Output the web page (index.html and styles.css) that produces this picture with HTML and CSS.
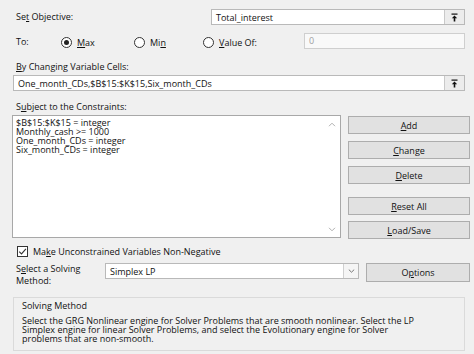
FILE: index.html
```html
<!DOCTYPE html>
<html>
<head>
<meta charset="utf-8">
<link rel="stylesheet" href="styles.css">
</head>
<body>
<div class="dialog">
  <div class="row r-objective">
    <span class="lbl">Se<u>t</u> Objective:</span>
    <div class="refedit obj">
      <span class="val">Total_interest</span>
      <span class="collapse"><svg width="9" height="9" viewBox="0 0 9 9"><rect x="1.5" y="0.5" width="6" height="1.2" fill="#111"/><path d="M4.5 2.4 L1.8 5.2 H3.7 V8.6 H5.3 V5.2 H7.2 Z" fill="#111"/></svg></span>
    </div>
  </div>

  <div class="row r-to">
    <span class="lbl">To:</span>
    <span class="radio"><span class="dot on"></span><span><u>M</u>ax</span></span>
    <span class="radio"><span class="dot"></span><span>Mi<u>n</u></span></span>
    <span class="radio"><span class="dot"></span><span><u>V</u>alue Of:</span></span>
    <div class="field disabled">0</div>
  </div>

  <div class="row r-label1"><span class="lbl"><u>B</u>y Changing Variable Cells:</span></div>

  <div class="row r-cells">
    <div class="refedit full">
      <span class="val">One_month_CDs,$B$15:$K$15,Six_month_CDs</span>
      <span class="collapse"><svg width="9" height="9" viewBox="0 0 9 9"><rect x="1.5" y="0.5" width="6" height="1.2" fill="#111"/><path d="M4.5 2.4 L1.8 5.2 H3.7 V8.6 H5.3 V5.2 H7.2 Z" fill="#111"/></svg></span>
    </div>
  </div>

  <div class="row r-label2"><span class="lbl">S<u>u</u>bject to the Constraints:</span></div>

  <div class="row r-constraints">
    <div class="listbox">
      <div class="items">
        <div>$B$15:$K$15 = integer</div>
        <div>Monthly_cash &gt;= 1000</div>
        <div>One_month_CDs = integer</div>
        <div>Six_month_CDs = integer</div>
      </div>
      <div class="scroll">
        <svg width="8" height="5" viewBox="0 0 8 5"><path d="M1 4.2 L4 1.2 L7 4.2" fill="none" stroke="#b0b0b0" stroke-width="1"/></svg>
        <svg width="8" height="5" viewBox="0 0 8 5"><path d="M1 0.8 L4 3.8 L7 0.8" fill="none" stroke="#b0b0b0" stroke-width="1"/></svg>
      </div>
    </div>
    <div class="buttons">
      <div class="btn b-add"><span><u>A</u>dd</span></div>
      <div class="btn b-change"><span><u>C</u>hange</span></div>
      <div class="btn b-delete"><span><u>D</u>elete</span></div>
      <div class="btn b-reset"><span><u>R</u>eset All</span></div>
      <div class="btn b-load"><span><u>L</u>oad/Save</span></div>
    </div>
  </div>

  <div class="row r-check">
    <span class="checkbox"><svg width="9" height="9" viewBox="0 0 9 9"><path d="M1.2 4.6 L3.5 6.9 L7.9 1.8" fill="none" stroke="#333" stroke-width="1.1"/></svg></span>
    <span>Ma<u>k</u>e Unconstrained Variables Non-Negative</span>
  </div>

  <div class="row r-method">
    <span class="lbl method-lbl">S<u>e</u>lect a Solving<br>Method:</span>
    <div class="select">
      <span class="val">Simplex LP</span>
      <span class="caret"><svg width="7" height="4" viewBox="0 0 7 4"><path d="M0.8 0.6 L3.5 3.2 L6.2 0.6" fill="none" stroke="#777" stroke-width="1"/></svg></span>
    </div>
    <div class="btn b-options"><span>O<u>p</u>tions</span></div>
  </div>

  <div class="group">
    <div class="g-title">Solving Method</div>
    <div class="g-text">Select the GRG Nonlinear engine for Solver Problems that are smooth nonlinear. Select the LP<br>Simplex engine for linear Solver Problems, and select the Evolutionary engine for Solver<br>problems that are non-smooth.</div>
  </div>
</div>
</body>
</html>
```

FILE: styles.css
```css
html, body {
  margin: 0;
  padding: 0;
}
body {
  width: 474px;
  height: 354px;
  overflow: hidden;
  background: #f0f0f0;
  font-family: "Open Sans", "Noto Sans", sans-serif;
  font-size: 9px;
  font-weight: 500;
  color: #111;
}
u {
  text-decoration: underline;
  text-underline-offset: 1px;
}
.dialog {
  display: flex;
  flex-direction: column;
  padding: 0 4px 0 12px;
}
.row {
  display: flex;
  align-items: center;
}
.lbl {
  padding-left: 4px;
  line-height: 12px;
}

/* objective */
.r-objective {
  margin-top: 9px;
  height: 16px;
}
.refedit {
  display: flex;
  align-items: center;
  box-sizing: border-box;
  height: 16px;
  border: 1px solid #b9b9b9;
  background: #fff;
  margin-right: 5px;
}
.refedit .val {
  flex: 1;
  padding-left: 4px;
  white-space: nowrap;
}
.obj {
  margin-left: auto;
  width: 254px;
}
.full {
  width: 453px;
  margin-left: 1px;
}
.collapse {
  width: 20px;
  height: 14px;
  box-sizing: border-box;
  border-left: 1px solid #c9c9c9;
  background: #ececec;
  display: flex;
  align-items: center;
  justify-content: center;
}

/* To: row */
.r-to {
  display: grid;
  grid-template-columns: 49px 73px 69px 101px 161px;
  align-items: center;
  margin-top: 8px;
  height: 16px;
}
.radio {
  display: flex;
  align-items: center;
  gap: 5px;
  margin-top: 2px;
}
.dot {
  width: 11px;
  height: 11px;
  box-sizing: border-box;
  border: 1px solid #333;
  border-radius: 50%;
  background: #fff;
  position: relative;
}
.dot.on::after {
  content: "";
  position: absolute;
  inset: 2px;
  border-radius: 50%;
  background: #222;
}
.field {
  box-sizing: border-box;
  height: 16px;
  line-height: 14px;
  padding-left: 4px;
  border: 1px solid #cfcfcf;
  background: #f9f9f9;
}
.field.disabled {
  color: #a0a0a0;
}
.r-to .lbl {
  margin-top: 2px;
}

.r-label1 {
  margin-top: 12px;
}
.r-cells {
  margin-top: 2px;
}
.r-label2 {
  margin-top: 10px;
}

/* constraints */
.r-constraints {
  margin-top: 2px;
  align-items: flex-start;
  gap: 7px;
}
.listbox {
  width: 329px;
  height: 123px;
  box-sizing: border-box;
  border: 1px solid #a8a8a8;
  background: #fff;
  display: flex;
}
.items {
  flex: 1;
  padding: 2px 3px;
  line-height: 9px;
  white-space: nowrap;
}
.scroll {
  width: 16px;
  display: flex;
  flex-direction: column;
  align-items: center;
  justify-content: space-between;
  padding: 6px 0 5px;
}
.buttons {
  width: 122px;
  display: flex;
  flex-direction: column;
}
.btn {
  box-sizing: border-box;
  height: 18px;
  border: 1px solid #adadad;
  background: #e1e1e1;
  display: flex;
  align-items: center;
  justify-content: center;
}
.b-add { margin-top: 1px; }
.b-change { margin-top: 7px; }
.b-delete { margin-top: 7px; }
.b-reset { margin-top: 13px; }
.b-load { margin-top: 6px; }

/* checkbox */
.r-check {
  margin-top: 7px;
  height: 11px;
  gap: 5px;
}
.checkbox {
  margin-left: 5px;
  width: 11px;
  height: 11px;
  box-sizing: border-box;
  border: 1px solid #333;
  background: #fff;
  display: flex;
  align-items: center;
  justify-content: center;
}

/* method */
.r-method {
  margin-top: 6px;
  align-items: flex-start;
}
.method-lbl {
  width: 89px;
}
.select {
  width: 254px;
  height: 16px;
  box-sizing: border-box;
  border: 1px solid #b9b9b9;
  background: #fff;
  display: flex;
  align-items: center;
}
.select .val {
  flex: 1;
  padding-left: 4px;
}
.caret {
  width: 15px;
  height: 14px;
  box-sizing: border-box;
  border-left: 1px solid #d0d0d0;
  background: #f5f5f5;
  display: flex;
  align-items: center;
  justify-content: center;
}
.b-options {
  margin-left: 7px;
  width: 104px;
  height: 19px;
}

/* group */
.group {
  margin: 10px 5px 0 1px;
  height: 54px;
  box-sizing: border-box;
  border: 1px solid #dadada;
  padding: 3px 8px 0;
}
.g-title {
  line-height: 10px;
}
.g-text {
  margin-top: 5px;
  line-height: 9px;
  white-space: nowrap;
}
```
